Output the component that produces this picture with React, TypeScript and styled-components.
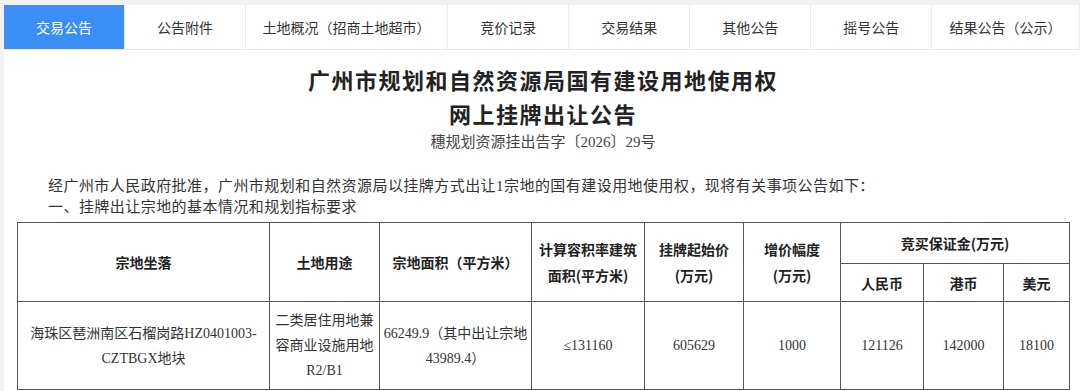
import styled, { createGlobalStyle } from 'styled-components';

const GlobalStyle = createGlobalStyle`
  html, body {
    margin: 0;
    padding: 0;
    background: #f2f2f2;
  }
`;

const tabs = [
  '交易公告',
  '公告附件',
  '土地概况（招商土地超市）',
  '竞价记录',
  '交易结果',
  '其他公告',
  '摇号公告',
  '结果公告（公示）',
];

function App() {
  return (
    <>
      <GlobalStyle />
      <Page>
        <Panel>
          <TabBar>
            {tabs.map((label, i) => (
              <Tab key={label} $active={i === 0}>
                {label}
              </Tab>
            ))}
          </TabBar>
          <Content>
            <TitleBlock>
              <Title>广州市规划和自然资源局国有建设用地使用权</Title>
              <Title>网上挂牌出让公告</Title>
              <DocNo>穗规划资源挂出告字〔2026〕29号</DocNo>
            </TitleBlock>
            <Para>
              经广州市人民政府批准，广州市规划和自然资源局以挂牌方式出让1宗地的国有建设用地使用权，现将有关事项公告如下：
            </Para>
            <Para>一、挂牌出让宗地的基本情况和规划指标要求</Para>
            <Table>
              <colgroup>
                <col style={{ width: 252 }} />
                <col style={{ width: 110 }} />
                <col style={{ width: 152 }} />
                <col style={{ width: 113 }} />
                <col style={{ width: 99 }} />
                <col style={{ width: 97 }} />
                <col style={{ width: 83 }} />
                <col style={{ width: 80 }} />
                <col style={{ width: 66 }} />
              </colgroup>
              <thead>
                <HeadRow $h={41}>
                  <Th rowSpan={2}>宗地坐落</Th>
                  <Th rowSpan={2}>土地用途</Th>
                  <Th rowSpan={2}>宗地面积（平方米）</Th>
                  <Th rowSpan={2}>
                    计算容积率建筑
                    <br />
                    面积(平方米)
                  </Th>
                  <Th rowSpan={2}>
                    挂牌起始价
                    <br />
                    (万元)
                  </Th>
                  <Th rowSpan={2}>
                    增价幅度
                    <br />
                    (万元)
                  </Th>
                  <Th colSpan={3}>竞买保证金(万元)</Th>
                </HeadRow>
                <HeadRow $h={38}>
                  <Th>人民币</Th>
                  <Th>港币</Th>
                  <Th>美元</Th>
                </HeadRow>
              </thead>
              <tbody>
                <tr>
                  <Td>
                    海珠区琶洲南区石榴岗路HZ0401003-
                    <br />
                    CZTBGX地块
                  </Td>
                  <Td>
                    二类居住用地兼
                    <br />
                    容商业设施用地
                    <br />
                    R2/B1
                  </Td>
                  <Td>
                    66249.9（其中出让宗地
                    <br />
                    43989.4）
                  </Td>
                  <Td>≤131160</Td>
                  <Td>605629</Td>
                  <Td>1000</Td>
                  <Td>121126</Td>
                  <Td>142000</Td>
                  <Td>18100</Td>
                </tr>
              </tbody>
            </Table>
          </Content>
        </Panel>
      </Page>
    </>
  );
}

const Page = styled.div`
  padding: 5px 0 0 4px;
  min-height: 391px;
  box-sizing: border-box;
`;

const Panel = styled.div`
  background: #fff;
  min-height: 386px;
`;

const TabBar = styled.div`
  display: flex;
  height: 44px;
  border-bottom: 1px solid #e8e8e8;
  font-family: 'Noto Sans CJK SC', sans-serif;
`;

const Tab = styled.div<{ $active?: boolean }>`
  min-width: 121px;
  box-sizing: border-box;
  padding: 0 19px;
  display: flex;
  align-items: center;
  justify-content: center;
  white-space: nowrap;
  font-size: 14px;
  color: ${(p) => (p.$active ? '#fff' : '#333')};
  background: ${(p) => (p.$active ? '#3a8ef4' : '#fff')};
  border-right: 1px solid #ececec;
`;

const Content = styled.div`
  padding: 0 11px 0 13px;
  font-family: 'Liberation Serif', 'Noto Sans CJK SC', serif;
  color: #333;
`;

const TitleBlock = styled.div`
  display: flex;
  flex-direction: column;
  align-items: center;
  padding-top: 12px;
`;

const Title = styled.div`
  font-family: 'Noto Sans CJK SC', sans-serif;
  font-weight: 700;
  font-size: 22px;
  line-height: 34px;
  letter-spacing: 1.5px;
  color: #222;
`;

const DocNo = styled.div`
  font-size: 15px;
  line-height: 24px;
  color: #444;
`;

const Para = styled.p`
  margin: 0;
  font-size: 15px;
  line-height: 21px;
  letter-spacing: 0.45px;
  text-indent: 31px;
  color: #333;

  &:first-of-type {
    margin-top: 22px;
  }
`;

const Table = styled.table`
  margin-top: 4px;
  width: 1052px;
  border-collapse: collapse;
  table-layout: fixed;
  border: 1px solid #555;
`;

const HeadRow = styled.tr<{ $h: number }>`
  height: ${(p) => p.$h}px;
`;

const Th = styled.th`
  border: 1px solid #555;
  padding: 0 4px;
  font-family: 'Noto Sans CJK SC', sans-serif;
  font-weight: 700;
  font-size: 14px;
  line-height: 26px;
  color: #222;
  text-align: center;
  vertical-align: middle;
`;

const Td = styled.td`
  border: 1px solid #555;
  padding: 6px 2px;
  font-size: 14px;
  line-height: 25px;
  color: #333;
  text-align: center;
  vertical-align: middle;
  white-space: nowrap;
`;

export default App;
